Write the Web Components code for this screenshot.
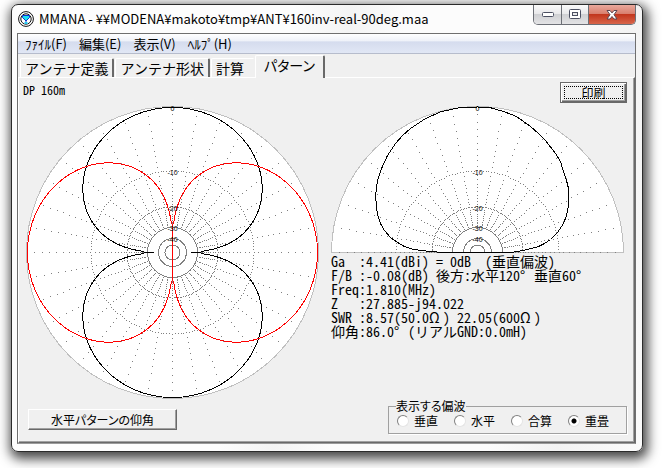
<!DOCTYPE html>
<html lang="ja">
<head>
<meta charset="utf-8">
<title>MMANA</title>
<style>
body { margin: 0; padding: 4px 25px 17px 11px; background: #fff; color: #000; font-family: "Noto Sans", "Noto Sans CJK JP", sans-serif; font-size: 12px; }
</style>
</head>
<body>
<app-window caption="MMANA - ¥¥MODENA¥makoto¥tmp¥ANT¥160inv-real-90deg.maa">
  <menu-bar slot="menu" items="ﾌｧｲﾙ(F)|編集(E)|表示(V)|ﾍﾙﾌﾟ(H)"></menu-bar>
  <tab-strip slot="tabs" items="アンテナ定義|アンテナ形状|計算|パターン" selected="3"></tab-strip>
  <pattern-page></pattern-page>
</app-window>

<script>
class Base extends HTMLElement {
  constructor() { super(); this.attachShadow({ mode: 'open' }); }
  connectedCallback() { this.shadowRoot.innerHTML = this.view(); }
  get items() { return this.getAttribute('items').split('|'); }
}

customElements.define('app-window', class extends Base {
  view() { return `
<style>
:host { display: block; box-sizing: border-box; border: 1px solid #2b2b2b; border-radius: 7px; padding: 0 6px 7px 5px;
  background: linear-gradient(100deg, #fdfdfd 0 40%, #f4f4f4 48%, #fcfcfc 56% 78%, #f3f3f3 88%, #fbfbfb);
  box-shadow: 2px 4px 12px 3px rgba(0,0,0,.72); }
header { display: flex; height: 28px; padding-left: 1px; }
.logo { width: 16px; height: 16px; margin-top: 6px; flex: none; }
h1 { margin: 0; padding-left: 5px; flex: 1; min-width: 0; font: 400 13px/28px "Noto Sans CJK JP", sans-serif; white-space: nowrap; }
.caps { display: flex; height: 19px; border: 1px solid #6c6f76; border-top: 0; border-radius: 0 0 5px 5px; overflow: hidden; }
.caps button { appearance: none; border: 0; padding: 0; margin: 0; width: 27px; display: grid; place-items: center;
  background: linear-gradient(#fafafa, #e9e9eb 45%, #cfd0d3 50%, #e3e3e5); }
.caps button + button { border-left: 1px solid #6c6f76; }
.caps .close { width: 47px; background: linear-gradient(#e9a99c, #d9806f 45%, #c2361d 50%, #d8654a); }
.client { border: 1px solid #6f6f6f; border-bottom-color: #9a9a9a; background: #f0f0f0; }
</style>
<header>
  <svg class="logo" viewBox="0 0 16 16"><circle cx="8" cy="8" r="7.400" fill="#fff" stroke="#111"/><circle cx="8" cy="8" r="5.2" fill="#fff" stroke="#111"/><path d="M6 8h4v4.500H6z" fill="#fff"/><path d="M4.500 4.500h7v2L8 10 4.500 6.500z" fill="#1ce0f0" stroke="#0b35d5"/><path d="M8 9.500v2" fill="none" stroke="#1540d0"/><path d="M6.500 11h3v2h-3z" fill="#22c8f0"/></svg>
  <h1>${this.getAttribute('caption')}</h1>
  <div class="caps">
    <button aria-label="最小化"><svg width="12" height="5"><rect x=".5" y=".5" width="11" height="4" rx="1" fill="#fff" stroke="#4c5062"/></svg></button>
    <button aria-label="最大化"><svg width="12" height="11"><rect x=".5" y=".5" width="11" height="9" rx="1" fill="#fff" stroke="#4c5062"/><rect x="3.5" y="3.5" width="5" height="3" fill="#e9e9eb" stroke="#4c5062"/></svg></button>
    <button class="close" aria-label="閉じる"><svg width="14" height="12"><path d="M2 1.500h3l2 2.400 2-2.400h3l-3 4.200 3 4.300h-3l-2-2.500-2 2.500h-3l3-4.300z" fill="#fff" stroke="#5b4550"/></svg></button>
  </div>
</header>
<div class="client"><slot name="menu"></slot><slot name="tabs"></slot><slot></slot></div>`; }
});

customElements.define('menu-bar', class extends Base {
  view() { return `
<style>
:host { display: block; border-bottom: 1px solid #b6bccc; background: linear-gradient(#fff, #eff2f9 35%, #d5dcee 42%, #e1e7f5); }
nav { display: flex; height: 19px; padding-left: 1px; }
button { appearance: none; border: 0; background: none; margin: 0; padding: 0 6px; color: #000; font: 13px/19px "Noto Sans CJK JP", sans-serif; white-space: nowrap; }
</style>
<nav>${this.items.map(t => `<button>${t}</button>`).join('')}</nav>`; }
});

customElements.define('tab-strip', class extends Base {
  view() { const on = +this.getAttribute('selected'); return `
<style>
:host { display: block; }
div { display: flex; align-items: flex-end; height: 23px; padding-left: 2px; }
button { appearance: none; box-sizing: border-box; height: 19px; margin: 0 1px 0 0; padding: 0 4px; color: #000; background: #f0f0f0;
  border: solid; border-width: 1px 2px 0 1px; border-color: #fff #696969 #fff #fff; border-radius: 2px 2px 0 0;
  font: 14px/16px "Noto Sans CJK JP", sans-serif; white-space: nowrap; }
.before { border-right-color: #f0f0f0; padding-right: 9px; margin-right: 0; }
.on { position: relative; height: 23px; padding: 0 8px 4px; margin-bottom: -1px; font-feature-settings: "palt"; }
</style>
<div role="tablist">${this.items.map((t, i) => `<button role="tab" aria-selected="${i === on}" class="${i === on ? 'on' : i === on - 1 ? 'before' : ''}">${t}</button>`).join('')}</div>`; }
});

customElements.define('bevel-button', class extends Base {
  view() { return `
<style>
:host { display: block; }
button { appearance: none; display: block; box-sizing: border-box; width: 100%; height: 21px; margin: 0; padding: 0; color: #000; background: #f0f0f0;
  border: 1px solid; border-color: #fff #696969 #696969 #fff; box-shadow: inset -1px -1px #a0a0a0;
  font: 12px/16px "Noto Sans CJK JP", sans-serif; font-feature-settings: "palt"; }
:host([focused]) button { outline: 1px dotted #000; outline-offset: -5px; border-color: #696969; box-shadow: inset 1px 1px #fff, inset -1px -1px #696969, inset -2px -2px #a0a0a0; }
</style>
<button><slot></slot></button>`; }
});

/* Polar diagram on a logarithmic scale: every 2 dB shrinks the radius to 0.89. */
customElements.define('polar-chart', class extends Base {
  view() {
    const half = this.hasAttribute('half'), R = 146, c = 146.5;
    const rad = db => R * Math.pow(0.89, db / 2);
    const dot = (r, deg) => {
      const a = deg * Math.PI / 180;
      return `M${Math.round(146 + r * Math.cos(a))} ${Math.round(146 - r * Math.sin(a)) + .5}h1`;
    };
    const end = half ? 180 : 358;
    let dots = '';
    for (let a = 0; a <= end; a += 10) for (let db = 1; db < 30; db++) dots += dot(rad(db), a);
    for (const db of [10, 20]) for (let a = 0; a <= end; a += 2) dots += dot(rad(db), a);
    const arc = r => half ? `M${c - r} ${c}A${r} ${r} 0 0 1 ${c + r} ${c}` : `M${c - r} ${c}a${r} ${r} 0 1 1 ${2 * r} 0a${r} ${r} 0 1 1 ${-2 * r} 0`;
    const snap = v => Math.abs(v) < 1.3 ? 0 : v;
    const lobe = (from, to, f) => {
      const p = [];
      for (let d = from; d <= to; d++) {
        const a = d * Math.PI / 180, r = (R - 1) * Math.pow(Math.abs(f(a)), .506);
        p.push((c + snap(r * Math.cos(a))).toFixed(1) + ' ' + (c - snap(r * Math.sin(a))).toFixed(1));
      }
      return 'M' + p.join('L');
    };
    const elevation = [[-33,0],[-48,1],[-64,3],[-73,6],[-80,10],[-87,15],[-93,22],[-97,29],[-100,38],[-101,46],[-102,57],[-100,72],[-96,84],[-90,97],[-82,109],[-75,117],[-67,124],[-52,134],[-36,141],[-17,145],[0,145.500],[14,144.500],[26,141],[39,136],[53,126],[61,119],[68,112],[78,99],[83,91],[85,84],[89,72],[91,64],[91,47],[89,37],[86,29],[80,20],[73,13],[67,9],[61,6],[46,2],[33,0]];
    const curves = half
      ? `<path d="M${elevation.map(([x, y]) => (c + x) + ' ' + (c - y)).join('L')}z" stroke="#000"/>`
      : `<path d="${lobe(1, 179, Math.sin)}${lobe(181, 359, Math.sin)}" stroke="#000"/><path d="${lobe(-90, 90, Math.cos)}${lobe(90, 270, Math.cos)}" stroke="#f00"/>`;
    return `
<style>
:host { display: block; }
svg { display: block; width: 100%; height: auto; }
text { font: 7px "Liberation Sans", sans-serif; text-anchor: middle; fill: #000; }
</style>
<svg viewBox="0 0 293 ${half ? 147 : 293}" role="img" aria-label="${half ? '垂直パターン' : '水平パターン'}">
<g fill="none" shape-rendering="crispEdges">
<path d="${arc(R)}z" fill="#fff" stroke="#c0c0c0"/>
<path d="${dots}" stroke="#808080"/>
<path d="${arc(25)}${arc(14)}${arc(7.5)}" stroke="#808080"/>
${curves}</g>
${[0, 10, 20, 30, 40].map(db => `<text x="${c}" y="${Math.round(c - rad(db)) + 4}">${db ? -db : 0}</text>`).join('')}
</svg>`;
  }
});

customElements.define('result-list', class extends Base {
  view() { return `
<style>
:host { display: block; }
ul { list-style: none; margin: 0; padding: 0; }
li { font: 14px/14px "Noto Sans Mono CJK JP", "Noto Sans CJK JP", monospace; font-weight: 300; font-feature-settings: "hwid"; white-space: pre; }
b { display: inline-block; width: 1em; font-weight: inherit; }
</style>
<ul>
<li>Ga  :4.41(dBi) = 0dB  (垂直偏波)</li>
<li>F/B :-0.08(dB) 後方:水平120<b>°</b>垂直60<b>°</b></li>
<li>Freq:1.810(MHz)</li>
<li>Z   :27.885-j94.022</li>
<li>SWR :8.57(50.0<b>Ω</b>) 22.05(600<b>Ω</b>)</li>
<li>仰角:86.0<b>°</b>(リアルGND:0.0mH)</li>
</ul>`; }
});

customElements.define('option-group', class extends Base {
  view() { const on = +this.getAttribute('selected'); return `
<style>
:host { display: block; }
fieldset { margin: 0; padding: 0 17px 5px 8px; min-width: 0; border: 1px solid #a0a0a0; box-shadow: 1px 1px #fff; font: 12px/14px "Noto Sans CJK JP", sans-serif; }
legend { margin-left: -1px; padding: 0; font-feature-settings: "palt"; }
div { display: flex; gap: 16px; padding-top: 1px; }
label { display: flex; align-items: center; gap: 5px; white-space: nowrap; }
input { appearance: none; box-sizing: border-box; width: 12px; height: 12px; margin: 0; border: 1px solid; border-color: #808080 #e4e4e4 #e4e4e4 #808080; border-radius: 50%; background: #fff; }
input:checked { background: radial-gradient(circle, #000 0 2px, #fff 3px); }
</style>
<fieldset><legend>${this.getAttribute('legend')}</legend>
<div>${this.items.map((t, i) => `<label><input type="radio" name="pol"${i === on ? ' checked' : ''}>${t}</label>`).join('')}</div></fieldset>`; }
});

customElements.define('pattern-page', class extends Base {
  view() { return `
<style>
:host { display: block; border: 1px solid; border-color: #fff #696969 #696969 #fff; box-shadow: inset -1px -1px #a0a0a0; padding: 4px 7px 8px; }
header, footer { display: flex; justify-content: space-between; }
header { height: 24px; }
p { margin: 0; font: 12px/16px "Noto Sans Mono CJK JP", "Noto Sans CJK JP", monospace; font-weight: 300; font-feature-settings: "hwid"; }
.print { width: 67px; }
.angle { width: 149px; margin-bottom: 4px; }
main { display: grid; grid-template-columns: 1fr 1fr; gap: 12px; padding-right: 3px; }
result-list { margin-top: 1px; }
footer { align-items: flex-end; padding-left: 2px; }
.caption { margin-left: -3px; }
</style>
<header><p class="caption">DP 160m</p><bevel-button class="print" focused>印刷</bevel-button></header>
<main>
  <polar-chart></polar-chart>
  <section><polar-chart half></polar-chart><result-list></result-list></section>
</main>
<footer><bevel-button class="angle">水平パターンの仰角</bevel-button>
<option-group legend="表示する偏波" items="垂直|水平|合算|重畳" selected="3"></option-group></footer>`; }
});
</script>
</body>
</html>
